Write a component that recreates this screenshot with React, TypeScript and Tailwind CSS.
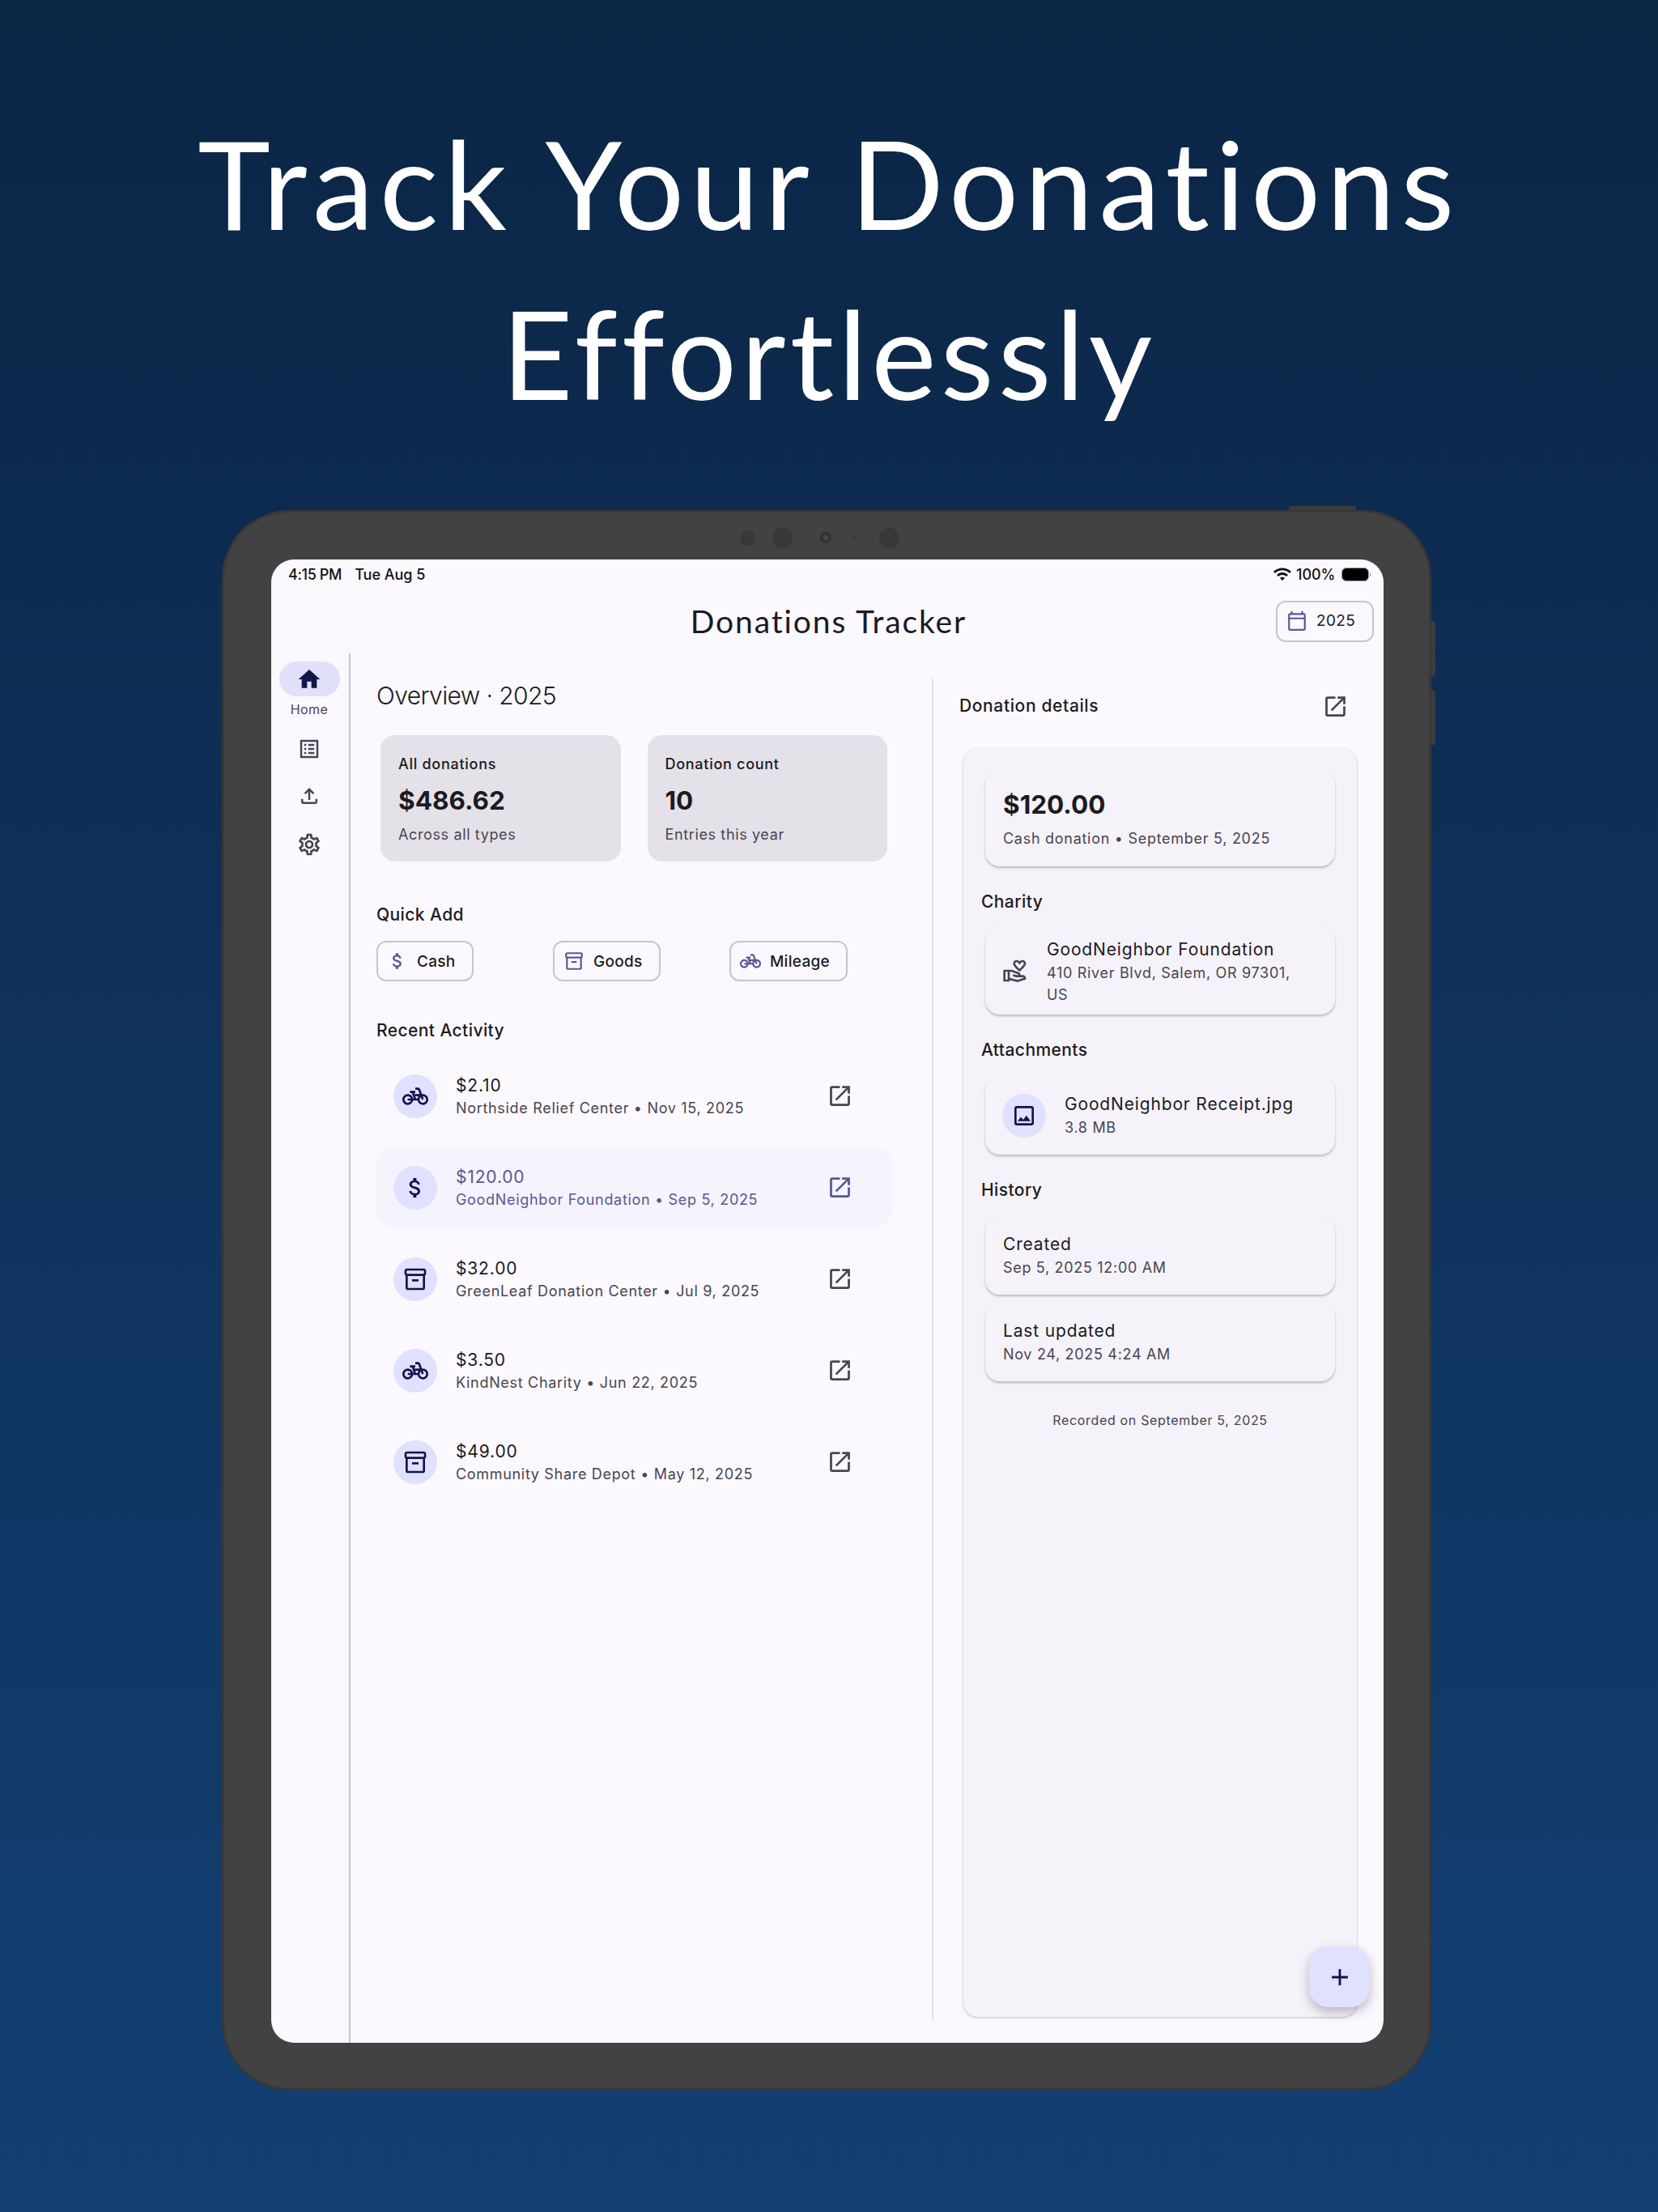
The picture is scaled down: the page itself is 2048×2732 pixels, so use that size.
import { FC, ReactNode } from 'react';
import {
  MdAdd,
  MdAttachMoney,
  MdHome,
  MdOutlineCalendarToday,
  MdOutlineFileUpload,
  MdOutlineImage,
  MdOutlineInventory2,
  MdOutlineListAlt,
  MdOutlineOpenInNew,
  MdOutlinePedalBike,
  MdOutlineSettings,
  MdOutlineVolunteerActivism,
  MdWifi,
} from 'react-icons/md';

type Kind = 'bike' | 'cash' | 'box';

const activity: { amount: string; sub: string; kind: Kind; selected?: boolean }[] = [
  { amount: '$2.10', sub: 'Northside Relief Center • Nov 15, 2025', kind: 'bike' },
  { amount: '$120.00', sub: 'GoodNeighbor Foundation • Sep 5, 2025', kind: 'cash', selected: true },
  { amount: '$32.00', sub: 'GreenLeaf Donation Center • Jul 9, 2025', kind: 'box' },
  { amount: '$3.50', sub: 'KindNest Charity • Jun 22, 2025', kind: 'bike' },
  { amount: '$49.00', sub: 'Community Share Depot • May 12, 2025', kind: 'box' },
];

const KindIcon: FC<{ kind: Kind; size: number }> = ({ kind, size }) => {
  if (kind === 'bike') return <MdOutlinePedalBike size={size} />;
  if (kind === 'cash') return <MdAttachMoney size={size} />;
  return <MdOutlineInventory2 size={size} />;
};

const StatCard: FC<{ label: string; value: string; note: string }> = ({ label, value, note }) => (
  <div className="h-[156px] rounded-[18px] bg-[#e4e1e9] px-[22px] pt-[24px]">
    <div className="text-[18px] leading-[24px] font-medium tracking-[0.04em] text-[#1b1b21]">{label}</div>
    <div className="mt-[11px] text-[31.5px] leading-[44px] font-bold text-[#1b1b21]">{value}</div>
    <div className="mt-[8px] text-[18px] leading-[24px] tracking-[0.035em] text-[#47464f]">{note}</div>
  </div>
);

const Chip: FC<{ label: string; kind: Kind }> = ({ label, kind }) => (
  <div className="flex h-[50px] w-fit items-center gap-[11px] rounded-[12px] border-2 border-[#c8c5d0] pr-[20px] pl-[11px]">
    <span className="text-[#575992]">
      <KindIcon kind={kind} size={26} />
    </span>
    <span className="pt-[1px] text-[19px] leading-[24px] font-medium tracking-[0.015em] text-[#1b1b21]">{label}</span>
  </div>
);

const SectionTitle: FC<{ children: ReactNode; className?: string }> = ({ children, className }) => (
  <div className={`text-[21px] leading-[28px] font-medium tracking-[0.02em] text-[#1b1b21] ${className ?? ''}`}>
    {children}
  </div>
);

const DetailCard: FC<{ children: ReactNode; className?: string }> = ({ children, className }) => (
  <div className={`mx-[5px] rounded-[18px] bg-[#f5f2fa] shadow-[0_2px_3px_rgba(0,0,0,0.24)] ${className ?? ''}`}>
    {children}
  </div>
);

const Round: FC<{ children: ReactNode }> = ({ children }) => (
  <div className="flex h-[54px] w-[54px] shrink-0 items-center justify-center rounded-full bg-[#e0e0ff] text-[#13144b]">
    {children}
  </div>
);

const App: FC = () => {
  return (
    <div className="h-[2732px] w-[2048px] overflow-hidden bg-gradient-to-b from-[#0b2545] to-[#134074] font-['Inter',sans-serif]">
      <div className="h-[630px] pt-[120px] text-center font-['Lato',sans-serif] text-[152px] leading-[210px] text-white">
        <div className="tracking-[0.048em]">Track Your Donations</div>
        <div className="tracking-[0.034em]">Effortlessly</div>
      </div>

      <div className="relative ml-[274px] h-[1952px] w-[1494px] rounded-[84px] border-[3px] border-[#383838] bg-[#424242]">
        <div className="absolute -top-[8px] left-[1315px] h-[5px] w-[83px] rounded-t-[3px] bg-[#3c3c3c]" />
        <div className="absolute top-[134px] -right-[8px] h-[68px] w-[5px] rounded-r-[3px] bg-[#3c3c3c]" />
        <div className="absolute top-[219px] -right-[8px] h-[68px] w-[5px] rounded-r-[3px] bg-[#3c3c3c]" />

        <div className="flex h-[58px] items-center pt-[4px] pl-[637px]">
          <div className="h-[19px] w-[19px] rounded-full bg-[#383838]" />
          <div className="ml-[21px] h-[25px] w-[25px] rounded-full bg-[#383838]" />
          <div className="ml-[34px] flex h-[14px] w-[14px] items-center justify-center rounded-full bg-[#333333]">
            <div className="h-[6px] w-[6px] rounded-full bg-[#4a4a4a]" />
          </div>
          <div className="ml-[26px] h-[5px] w-[5px] rounded-full bg-[#383838]" />
          <div className="ml-[28px] h-[25px] w-[25px] rounded-full bg-[#383838]" />
        </div>

        <div className="relative ml-[58px] flex h-[1832px] w-[1374px] flex-col overflow-hidden rounded-[28px] bg-[#fbf8ff]">
          <div className="flex h-[36px] shrink-0 items-center justify-between pr-[16px] pl-[21px] text-[18px] font-medium text-[#111111]">
            <div className="flex gap-[16px]">
              <span className="tracking-[-0.02em]">4:15 PM</span>
              <span>Tue Aug 5</span>
            </div>
            <div className="flex items-center gap-[5px]">
              <MdWifi size={24} />
              <span>100%</span>
              <div className="ml-[2px] flex items-center">
                <div className="h-[17px] w-[34px] rounded-[6px] border-[1.5px] border-[#9a9a9a] bg-black" />
                <div className="ml-[1px] h-[5px] w-[1.5px] rounded-r-[1px] bg-[#9a9a9a]" />
              </div>
            </div>
          </div>

          <div className="grid h-[80px] shrink-0 grid-cols-[1fr_auto_1fr] items-center">
            <div />
            <div className="pl-[3px] font-['Lato',sans-serif] text-[39px] tracking-[0.048em] text-[#1b1b21]">Donations Tracker</div>
            <div className="mr-[12px] flex h-[51px] w-[121px] items-center gap-[11px] justify-self-end rounded-[12px] border-2 border-[#c8c5d0] pl-[11px]">
              <span className="text-[#575992]">
                <MdOutlineCalendarToday size={26} />
              </span>
              <span className="text-[19px] leading-[24px] tracking-[0.02em] text-[#1b1b21]">2025</span>
            </div>
          </div>

          <div className="flex min-h-0 flex-1">
            <div className="flex w-[98px] shrink-0 flex-col items-center border-r-2 border-[#c8c5d0] pt-[10px] pr-[2px]">
              <div className="flex h-[43px] w-[75px] items-center justify-center rounded-full bg-[#e0e0f9] text-[#13144b]">
                <MdHome size={32} />
              </div>
              <div className="mt-[5px] text-[16px] leading-[22px] tracking-[0.03em] text-[#47464f]">Home</div>
              <div className="mt-[23px] text-[#47464f]">
                <MdOutlineListAlt size={30} />
              </div>
              <div className="mt-[28px] text-[#47464f]">
                <MdOutlineFileUpload size={30} />
              </div>
              <div className="mt-[29px] text-[#47464f]">
                <MdOutlineSettings size={32} />
              </div>
            </div>

            <div className="w-[718px] shrink-0 pl-[32px]">
              <div className="mt-[32px] text-[30px] leading-[40px] font-light tracking-[-0.02em] text-[#1b1b21]">
                Overview · 2025
              </div>
              <div className="mt-[29px] ml-[5px] grid w-[626px] grid-cols-2 gap-[33px]">
                <StatCard label="All donations" value="$486.62" note="Across all types" />
                <StatCard label="Donation count" value="10" note="Entries this year" />
              </div>

              <SectionTitle className="mt-[52px]">Quick Add</SectionTitle>
              <div className="mt-[18px] grid w-[654px] grid-cols-3">
                <Chip label="Cash" kind="cash" />
                <Chip label="Goods" kind="box" />
                <Chip label="Mileage" kind="bike" />
              </div>

              <SectionTitle className="mt-[47px]">Recent Activity</SectionTitle>
              <div className="mt-[18px] flex w-[637px] flex-col gap-[16px]">
                {activity.map((item) => (
                  <div
                    key={item.amount}
                    className={`flex h-[97px] items-center rounded-[20px] pr-[48px] pl-[21px] ${item.selected ? 'bg-[#f4f3fe]' : ''}`}
                  >
                    <Round>
                      <KindIcon kind={item.kind} size={32} />
                    </Round>
                    <div className="ml-[23px] min-w-0 flex-1">
                      <div className={`text-[21px] leading-[32px] tracking-[0.04em] ${item.selected ? 'text-[#575992]' : 'text-[#1b1b21]'}`}>
                        {item.amount}
                      </div>
                      <div className={`mb-[2px] text-[18px] leading-[24px] tracking-[0.038em] ${item.selected ? 'text-[#575992]' : 'text-[#47464f]'}`}>
                        {item.sub}
                      </div>
                    </div>
                    <span className={item.selected ? 'text-[#575992]' : 'text-[#47464f]'}>
                      <MdOutlineOpenInNew size={33} />
                    </span>
                  </div>
                ))}
              </div>
            </div>

            <div className="mt-[31px] mb-[27px] flex min-w-0 flex-1 flex-col border-l-2 border-[#e4e1e9]">
              <div className="flex h-[68px] shrink-0 items-center justify-between pr-[43px] pl-[32px]">
                <div className="text-[21px] font-medium tracking-[0.03em] text-[#1b1b21]">Donation details</div>
                <span className="text-[#47464f]">
                  <MdOutlineOpenInNew size={33} />
                </span>
              </div>
              <div className="mt-[18px] mr-[33px] mb-[5px] ml-[37px] flex-1 rounded-[18px] bg-[#f5f2fa] pt-[27px] pr-[22px] pl-[22px] shadow-[0_1px_3px_rgba(0,0,0,0.25)]">
                <DetailCard className="h-[119px] px-[22px] pt-[21px]">
                  <div className="text-[31.5px] leading-[44px] font-bold text-[#1b1b21]">$120.00</div>
                  <div className="mt-[7px] text-[18px] leading-[26px] tracking-[0.04em] text-[#47464f]">
                    Cash donation • September 5, 2025
                  </div>
                </DetailCard>

                <SectionTitle className="mt-[30px]">Charity</SectionTitle>
                <DetailCard className="mt-[17px] flex h-[108px] items-center pl-[21px]">
                  <span className="text-[#47464f]">
                    <MdOutlineVolunteerActivism size={32} />
                  </span>
                  <div className="ml-[23px] w-[330px] pt-[2px]">
                    <div className="text-[21px] leading-[30px] tracking-[0.04em] text-[#1b1b21]">GoodNeighbor Foundation</div>
                    <div className="text-[18px] leading-[27px] tracking-[0.038em] text-[#47464f]">
                      410 River Blvd, Salem, OR 97301, US
                    </div>
                  </div>
                </DetailCard>

                <SectionTitle className="mt-[30px]">Attachments</SectionTitle>
                <DetailCard className="mt-[18px] flex h-[97px] items-center gap-[23px] pl-[21px]">
                  <Round>
                    <MdOutlineImage size={32} />
                  </Round>
                  <div>
                    <div className="text-[21px] leading-[30px] tracking-[0.04em] text-[#1b1b21]">GoodNeighbor Receipt.jpg</div>
                    <div className="text-[18px] leading-[28px] tracking-[0.038em] text-[#47464f]">3.8 MB</div>
                  </div>
                </DetailCard>

                <SectionTitle className="mt-[30px]">History</SectionTitle>
                <DetailCard className="mt-[18px] flex h-[97px] flex-col justify-center px-[22px]">
                  <div className="text-[21px] leading-[30px] tracking-[0.04em] text-[#1b1b21]">Created</div>
                  <div className="text-[18px] leading-[28px] tracking-[0.038em] text-[#47464f]">Sep 5, 2025 12:00 AM</div>
                </DetailCard>
                <DetailCard className="mt-[10px] flex h-[97px] flex-col justify-center px-[22px]">
                  <div className="text-[21px] leading-[30px] tracking-[0.04em] text-[#1b1b21]">Last updated</div>
                  <div className="text-[18px] leading-[28px] tracking-[0.038em] text-[#47464f]">Nov 24, 2025 4:24 AM</div>
                </DetailCard>

                <div className="mt-[36px] text-center text-[16px] leading-[24px] tracking-[0.042em] text-[#47464f]">
                  Recorded on September 5, 2025
                </div>
              </div>
            </div>
          </div>

          <div className="absolute right-[17px] bottom-[44px] flex h-[75px] w-[75px] items-center justify-center rounded-[24px] bg-[#e0e0ff] text-[#13144b] shadow-[0_6px_14px_rgba(0,0,0,0.25)]">
            <MdAdd size={34} />
          </div>
        </div>
      </div>
    </div>
  );
};

export default App;
